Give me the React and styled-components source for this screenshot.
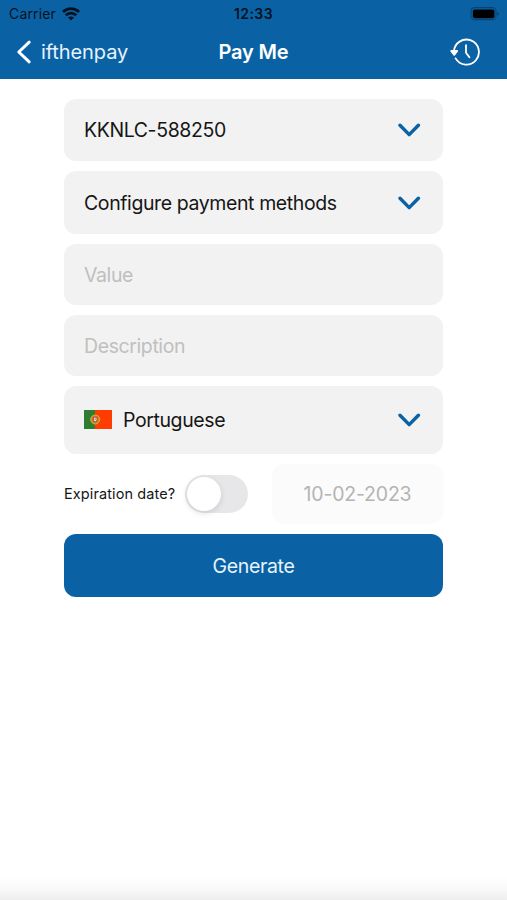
import React, { useState } from 'react';
import styled, { createGlobalStyle } from 'styled-components';

const GlobalStyle = createGlobalStyle`
    * {
        box-sizing: border-box;
    }
    body {
        margin: 0;
        background-color: #fff;
        font-family: Inter, "Liberation Sans", sans-serif;
    }
`

const Screen = styled.div`
    height: 100vh;
    width: 100%;
    display: flex;
    flex-direction: column;
    overflow: hidden;
    background-color: #fff;
`

const Header = styled.header`
    height: 79px;
    flex-shrink: 0;
    background-color: #0a62a5;
`

const StatusBar = styled.div`
    height: 27px;
    padding: 0 7px 0 9px;
    display: grid;
    grid-template-columns: 1fr auto 1fr;
    align-items: center;
    color: #06121f;
`

const Carrier = styled.div`
    display: flex;
    align-items: center;
    gap: 6px;
    font-size: 14px;
    letter-spacing: 0.15px;
`

const Clock = styled.div`
    margin-left: -2px;
    font-size: 14px;
    font-weight: 600;
    letter-spacing: 0.4px;
`

const Battery = styled.svg`
    justify-self: end;
`

const NavBar = styled.nav`
    height: 50px;
    padding: 0 26px 0 16px;
    display: grid;
    grid-template-columns: 1fr auto 1fr;
    align-items: center;
    color: #fff;
`

const BackButton = styled.button`
    padding: 0;
    display: flex;
    align-items: center;
    gap: 9px;
    border: none;
    background: none;
    color: #e6f3fd;
    font-family: inherit;
    font-size: 20px;
    letter-spacing: -0.1px;
    cursor: pointer;
`

const Title = styled.h1`
    margin: 0 0 0 10px;
    font-size: 20px;
    font-weight: 600;
    letter-spacing: -0.15px;
`

const HistoryButton = styled.button`
    padding: 0;
    display: flex;
    justify-self: end;
    border: none;
    background: none;
    color: #fff;
    cursor: pointer;
`

const Form = styled.form`
    width: 379px;
    margin: 20px auto 0;
    display: flex;
    flex-direction: column;
    gap: 10px;
`

const SelectField = styled.button`
    height: ${props => props.$height}px;
    padding: 0 22px 0 20px;
    display: flex;
    align-items: center;
    gap: 11px;
    border: none;
    border-radius: 12px;
    background-color: #f2f2f2;
    color: #161616;
    font-family: inherit;
    font-size: 19.5px;
    cursor: pointer;
`

const SelectLabel = styled.span`
    flex: 1;
    text-align: left;
    letter-spacing: -0.4px;
`

const TextField = styled.input`
    width: 100%;
    height: 61px;
    padding: 0 20px;
    border: none;
    border-radius: 12px;
    outline: none;
    background-color: #f2f2f2;
    font-family: inherit;
    font-size: 19.5px;
    letter-spacing: -0.4px;

    &::placeholder {
        color: #bfbfbf;
        opacity: 1;
    }
`

const ExpirationRow = styled.div`
    height: 60px;
    display: flex;
    align-items: center;
`

const ExpirationLabel = styled.span`
    width: 121px;
    padding-bottom: 1px;
    color: #161616;
    font-size: 14.5px;
    letter-spacing: 0.1px;
    white-space: nowrap;
`

const Toggle = styled.button`
    width: 63px;
    height: 38px;
    padding: 2px;
    display: flex;
    justify-content: ${props => props.$on ? 'flex-end' : 'flex-start'};
    border: none;
    border-radius: 19px;
    background-color: ${props => props.$on ? '#0a62a5' : '#e7e7e9'};
    cursor: pointer;
`

const Knob = styled.span`
    width: 34px;
    height: 34px;
    border-radius: 50%;
    background-color: #fff;
    box-shadow: 0 2px 6px rgba(0, 0, 0, 0.12);
`

const DateBox = styled.div`
    width: 171px;
    height: 60px;
    margin-left: auto;
    display: flex;
    justify-content: center;
    align-items: center;
    border-radius: 12px;
    background-color: #fbfbfb;
    color: #b4b4b4;
    font-size: 19.5px;
    letter-spacing: -0.2px;
`

const SubmitButton = styled.button`
    height: 63px;
    padding: 0;
    border: none;
    border-radius: 12px;
    background-color: #0a62a5;
    color: #e6f3fd;
    font-family: inherit;
    font-size: 19.5px;
    letter-spacing: -0.35px;
    cursor: pointer;
`

const BottomShade = styled.div`
    height: 24px;
    margin-top: auto;
    background: linear-gradient(to bottom, #fff 0%, #fafafa 50%, #eee 100%);
`

function WifiIcon() {
    return (
        <svg width="18" height="14" viewBox="0 0 18 14" fill="none" stroke="currentColor" strokeWidth="2.8">
            <path d="M1 4.9 C5.5 .5 12.5 .5 17 4.9" />
            <path d="M3.8 8.2 C6.8 5.3 11.2 5.3 14.2 8.2" />
            <path d="M9 13.4 L6 10.5 C7.7 9 10.3 9 12 10.5 Z" fill="currentColor" stroke="none" />
        </svg>
    )
}

function BatteryIcon() {
    return (
        <Battery width="30" height="14" viewBox="0 0 30 14">
            <rect x="1" y="0.7" width="25" height="12" rx="3.6" fill="none" stroke="#074476" strokeWidth="1.2" />
            <rect x="2.8" y="2.4" width="21.6" height="8.8" rx="2" fill="#000" />
            <path d="M27.4 4.9 C29.5 5.4 29.5 8.2 27.4 8.7 Z" fill="#074476" />
        </Battery>
    )
}

function BackIcon() {
    return (
        <svg width="16" height="24" viewBox="0 0 16 24" fill="none" stroke="#fff" strokeWidth="3" strokeLinecap="round" strokeLinejoin="round">
            <path d="M13.2 2.2 L2.8 12 L13.2 21.8" />
        </svg>
    )
}

function HistoryIcon() {
    return (
        <svg width="32" height="30" viewBox="0 0 32 30" fill="none" stroke="currentColor" strokeWidth="1.8" strokeLinecap="round" strokeLinejoin="round">
            <path d="M4.9 14.6 A12.5 12.5 0 1 1 6.6 21.4" />
            <path d="M17 8.2 V15.8 L20.4 20.2" />
            <path d="M2.2 13.9 H8.2 L5.2 17.9 Z" fill="currentColor" />
        </svg>
    )
}

function ChevronIcon() {
    return (
        <svg width="23" height="16" viewBox="0 0 23 16" fill="none" stroke="#0a62a5" strokeWidth="3.4" strokeLinecap="round" strokeLinejoin="round">
            <path d="M2 3.2 L11.2 12.6 L20.4 3.2" />
        </svg>
    )
}

function PortugalFlag() {
    return (
        <svg width="28" height="20" viewBox="0 0 28 20">
            <rect width="28" height="19" fill="#ff3d00" />
            <rect width="11" height="19" fill="#2f7d32" />
            <circle cx="11.2" cy="9.5" r="4.5" fill="#b98f25" stroke="#d2b52c" strokeWidth="1" />
            <path d="M8.8 6.8 H13.6 V10 C13.6 13.3 8.8 13.3 8.8 10 Z" fill="#d63b2d" />
            <path d="M9.9 7.8 H12.5 V10 C12.5 11.8 9.9 11.8 9.9 10 Z" fill="#e3e8ef" />
            <circle cx="11.2" cy="9.2" r="0.7" fill="#5c7eb8" />
        </svg>
    )
}

export default function App() {
    const [value, setValue] = useState('');
    const [description, setDescription] = useState('');
    const [hasExpiration, setHasExpiration] = useState(false);

    return (
        <>
        <GlobalStyle />
        <Screen>
            <Header>
                <StatusBar>
                    <Carrier>Carrier <WifiIcon /></Carrier>
                    <Clock>12:33</Clock>
                    <BatteryIcon />
                </StatusBar>
                <NavBar>
                    <BackButton type="button"><BackIcon />ifthenpay</BackButton>
                    <Title>Pay Me</Title>
                    <HistoryButton type="button"><HistoryIcon /></HistoryButton>
                </NavBar>
            </Header>
            <Form onSubmit={(e) => e.preventDefault()}>
                <SelectField type="button" $height={62}>
                    <SelectLabel>KKNLC-588250</SelectLabel>
                    <ChevronIcon />
                </SelectField>
                <SelectField type="button" $height={63}>
                    <SelectLabel>Configure payment methods</SelectLabel>
                    <ChevronIcon />
                </SelectField>
                <TextField placeholder="Value"
                value={value}
                onChange={(e) => setValue(e.target.value)} />
                <TextField placeholder="Description"
                value={description}
                onChange={(e) => setDescription(e.target.value)} />
                <SelectField type="button" $height={68}>
                    <PortugalFlag />
                    <SelectLabel>Portuguese</SelectLabel>
                    <ChevronIcon />
                </SelectField>
                <ExpirationRow>
                    <ExpirationLabel>Expiration date?</ExpirationLabel>
                    <Toggle type="button" $on={hasExpiration} onClick={() => setHasExpiration(!hasExpiration)}>
                        <Knob />
                    </Toggle>
                    <DateBox>10-02-2023</DateBox>
                </ExpirationRow>
                <SubmitButton type="submit">Generate</SubmitButton>
            </Form>
            <BottomShade />
        </Screen>
        </>
    )
}
